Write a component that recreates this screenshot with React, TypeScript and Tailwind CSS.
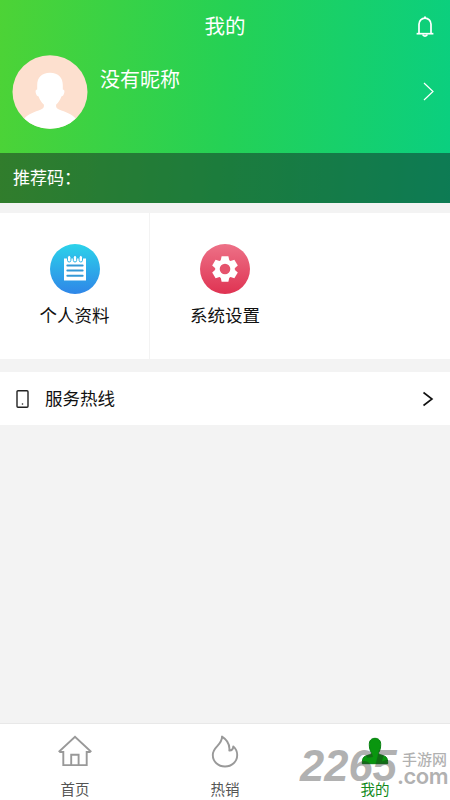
import React, { useState } from "react";

const BellIcon = () => (
  <svg width="18" height="22" viewBox="0 0 18 22" fill="none" stroke="white" strokeWidth="1.7">
    <path d="M3 17.500V8.200a6 6 0 0 1 12 0v9.300" />
    <path d="M0.600 17.700h16.800" />
    <path d="M9 2.500V0.600" strokeWidth="2" />
    <path d="M6.700 18.500a2.400 2.200 0 0 0 4.600 0" />
  </svg>
);

const Avatar = () => (
  <svg width="76" height="74" viewBox="0 0 76 74">
    <defs>
      <clipPath id="avatar">
        <ellipse cx="38" cy="37" rx="37.500" ry="36.700" />
      </clipPath>
    </defs>
    <g clipPath="url(#avatar)">
      <rect width="76" height="74" fill="#fde0cf" />
      <path
        d="M38 17.800c-8.500 0-12.800 5.200-12.800 12.200v4.600c-1.600.1-1.900 1.600-1.400 3.400.5 2 1.300 3.200 2.800 3.500 1.200 3.500 3 6 5.200 8 .5 2.700-.3 4-2.800 5C22.500 57 16.500 58.500 12 64v12h52V64c-4.500-5.500-10.500-7-17-9.500-2.500-1-3.300-2.300-2.800-5 2.200-2 4-4.500 5.200-8 1.500-.3 2.300-1.500 2.800-3.500.5-1.800.2-3.300-1.400-3.400V30C50.800 23 46.500 17.800 38 17.800z"
        fill="white"
      />
    </g>
  </svg>
);

const ProfileIcon = () => (
  <svg width="50" height="50" viewBox="0 0 50 50">
    <defs>
      <linearGradient id="blue" x1="0" y1="0" x2="0" y2="1">
        <stop offset="0" stopColor="#2bd2ea" />
        <stop offset="1" stopColor="#2f86e8" />
      </linearGradient>
    </defs>
    <circle cx="25" cy="25" r="25" fill="url(#blue)" />
    <rect x="14" y="14.500" width="22" height="22" fill="white" />
    <g fill="white" stroke="#2db8e9" strokeWidth="1">
      <rect x="17.500" y="11.500" width="3.400" height="6.500" rx="1.700" />
      <rect x="23.300" y="11.500" width="3.400" height="6.500" rx="1.700" />
      <rect x="29.100" y="11.500" width="3.400" height="6.500" rx="1.700" />
    </g>
    <path d="M17.300 21.500h15.400M17.300 26.500h15.400M17.300 31.700h15.400" stroke="#3499d6" strokeWidth="1.900" strokeLinecap="round" />
  </svg>
);

const SettingsIcon = () => (
  <svg width="50" height="50" viewBox="0 0 50 50">
    <defs>
      <linearGradient id="red" x1="0" y1="0" x2="0" y2="1">
        <stop offset="0" stopColor="#ed7187" />
        <stop offset="1" stopColor="#df3352" />
      </linearGradient>
    </defs>
    <circle cx="25" cy="25" r="25" fill="url(#red)" />
    <g fill="white">
      <circle cx="25" cy="25" r="9.800" />
      <path id="tooth" d="M20.600 17l1-4.800h6.800l1 4.800v16l-1 4.800h-6.800l-1-4.800z" />
      <use href="#tooth" transform="rotate(60 25 25)" />
      <use href="#tooth" transform="rotate(120 25 25)" />
    </g>
    <circle cx="25" cy="25" r="5.300" fill="#e5536d" />
  </svg>
);

const PhoneIcon = () => (
  <svg width="13" height="18" viewBox="0 0 13 18" fill="none" stroke="#222" strokeWidth="1.400">
    <rect x="1" y="0.800" width="11" height="16.400" rx="1" />
    <circle cx="6.500" cy="14" r="0.800" fill="#222" stroke="none" />
  </svg>
);

const HomeIcon = () => (
  <svg width="34" height="32" viewBox="0 0 34 32" fill="none" stroke="#999" strokeWidth="1.900">
    <path d="M5.300 17H2.200L1.400 16.200 17 1.700l15.600 14.500-.8.800h-3.100v13.100H5.300z" />
    <path d="M13.200 30v-10.200h7.400V30" />
  </svg>
);

const FireIcon = () => (
  <svg width="28" height="33" viewBox="0 0 28 33" fill="none" stroke="#999" strokeWidth="1.900" strokeLinejoin="round">
    <path d="M11 1.600c.3 4.600-2.600 7.200-5.200 10C3.200 14.300 1.800 16.800 1.800 20c0 6.600 5.400 11.500 12.200 11.500S26.200 26.600 26.200 20c0-3.500-1.300-6.300-3.900-8.600-.2 2.500-1.700 4.200-4 4.100C19 9.500 15.800 4.600 11 1.600z" />
  </svg>
);

const UserIcon = () => (
  <svg width="28" height="28" viewBox="0 0 28 28">
    <path
      d="M14 1.300c-3.900 0-5.700 2.500-5.700 6.200 0 3.400.8 6.300 2 7.900.3 1.300-.2 1.900-1.600 2.300-2.300.7-4.600 1.200-5.900 2.500C1.600 21.500 1.300 23.500 1.300 26.700h25.400c0-3.200-.3-5.200-1.500-6.500-1.300-1.300-3.600-1.800-5.900-2.500-1.400-.4-1.900-1-1.600-2.300 1.200-1.600 2-4.500 2-7.900 0-3.700-1.800-6.200-5.700-6.200z"
      fill="#09960f"
      stroke="#078010"
      strokeWidth="1"
    />
  </svg>
);

const services = [
  { name: "个人资料", icon: <ProfileIcon /> },
  { name: "系统设置", icon: <SettingsIcon /> },
];

const tabs = [
  { name: "首页", icon: <HomeIcon /> },
  { name: "热销", icon: <FireIcon /> },
  { name: "我的", icon: <UserIcon /> },
];

const App: React.FC = () => {
  const [activeTab, setActiveTab] = useState<string>("我的");

  return (
    <div className="relative flex h-[800px] w-[450px] flex-col overflow-hidden bg-[#f3f3f3] font-['Noto_Sans_CJK_SC',sans-serif] text-[#111]">
      {/* Header */}
      <header className="h-[203px] bg-linear-[94deg,#4dd336_0%,#25d155_50%,#0acf80_100%] text-white">
        <div className="grid h-[55px] grid-cols-3 items-start pr-4">
          <h1 className="col-start-2 pl-4 text-center text-[20.5px] leading-[51px]">我的</h1>
          <div className="flex justify-end pt-4">
            <BellIcon />
          </div>
        </div>
        <div className="flex h-[98px] items-start pl-3 pr-4">
          <Avatar />
          <p className="ml-3 mt-2 flex-1 text-[20px] leading-[31px]">没有昵称</p>
          <svg className="mt-[27px]" width="11" height="19" viewBox="0 0 11 19" fill="none" stroke="white" strokeWidth="1.200">
            <path d="M1 1l9 8.500L1 18" />
          </svg>
        </div>
        <div className="h-[50px] bg-[#11131e]/45 pl-[13px] text-[17px] leading-[48px]">推荐码：</div>
      </header>

      {/* Services */}
      <div className="mt-[10px] grid h-[146px] grid-cols-3 bg-white">
        {services.map((item, i) => (
          <button
            key={item.name}
            className={i === 0 ? "flex flex-col items-center border-r border-[#f3f3f3] pt-[31px]" : "flex flex-col items-center pt-[31px]"}
          >
            {item.icon}
            <span className="mt-2 text-[17.5px] leading-[26px]">{item.name}</span>
          </button>
        ))}
      </div>

      {/* Hotline */}
      <div className="mt-[13px] flex h-[53px] items-center bg-white pl-4 pr-4">
        <PhoneIcon />
        <span className="-mt-px ml-4 flex-1 text-[17.5px] leading-[26px]">服务热线</span>
        <svg width="12" height="16" viewBox="0 0 12 16" fill="none" stroke="#111" strokeWidth="1.600">
          <path d="M1.500 1.500l8.500 6.500-8.500 6.500" />
        </svg>
      </div>

      {/* Tab bar */}
      <nav className="mt-auto grid h-[77px] grid-cols-3 border-t border-[#e8e8e8] bg-white">
        {tabs.map((tab) => (
          <button key={tab.name} className="flex flex-col items-center" onClick={() => setActiveTab(tab.name)}>
            <span className="flex h-[54px] items-center justify-center">{tab.icon}</span>
            <span className={activeTab === tab.name ? "text-[14.500px] leading-[22px] text-[#128a1c]" : "text-[14.500px] leading-[22px] text-[#555]"}>
              {tab.name}
            </span>
          </button>
        ))}
      </nav>

      {/* Watermark */}
      <div className="pointer-events-none absolute bottom-[12px] right-0 flex h-[44px] w-[150px] font-['Liberation_Sans',sans-serif] font-bold text-[#222] opacity-35">
        <span className="w-[97px] text-[43.500px] italic leading-[44px]">2265</span>
        <span className="flex w-[53px] flex-col">
          <span className="pl-[5px] pt-[6px] font-['Noto_Sans_CJK_SC',sans-serif] text-[15px] font-medium leading-[18px]">手游网</span>
          <span className="font-['Inter',sans-serif] text-[22px] font-semibold leading-[17px] tracking-[-0.500px]">.com</span>
        </span>
      </div>
    </div>
  );
};

export default App;
